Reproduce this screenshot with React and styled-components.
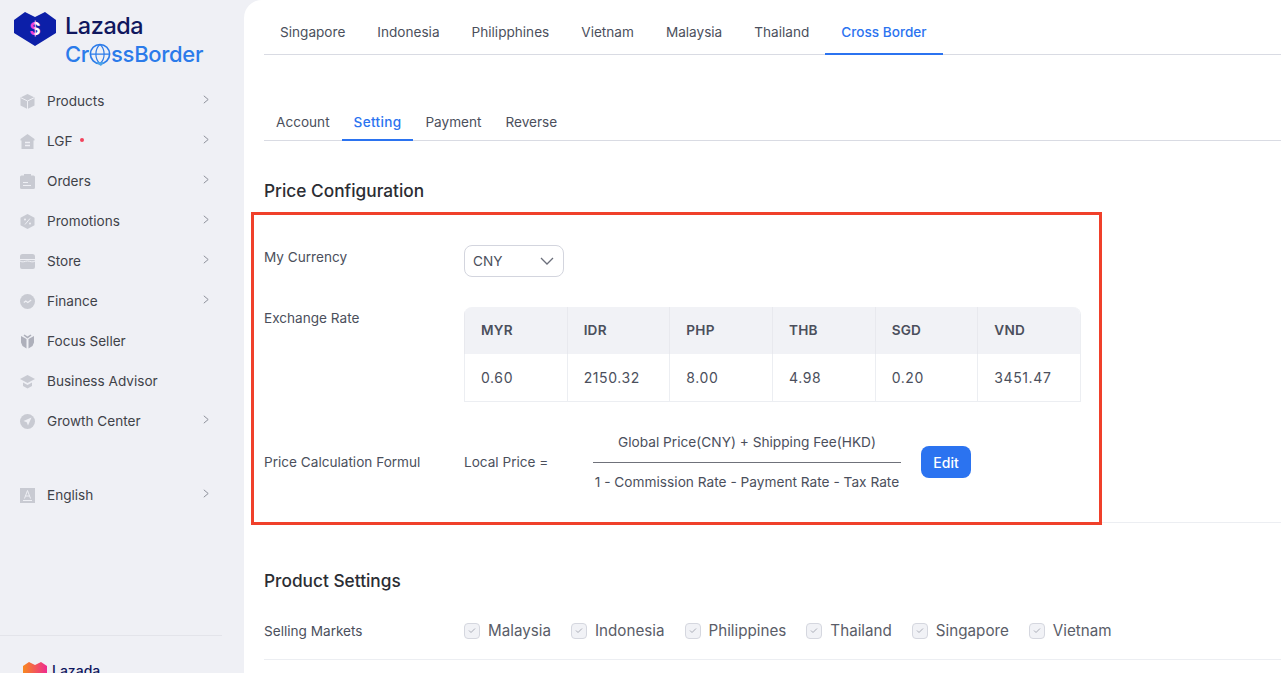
import React from 'react';
import styled, { createGlobalStyle } from 'styled-components';

const GlobalStyle = createGlobalStyle`
    html, body {
        margin: 0;
        padding: 0;
        height: 100%;
        overflow: hidden;
        background: #eff0f5;
    }
    * {
        box-sizing: border-box;
    }
    body {
        font-family: Inter, "Liberation Sans", sans-serif;
        color: #4b4f5c;
    }
`;

const Page = styled.div`
    display: flex;
    width: 1281px;
    height: 673px;
    overflow: hidden;
`;

const Sidebar = styled.aside`
    width: 244px;
    height: 673px;
    flex-shrink: 0;
    background: #eff0f5;
    display: flex;
    flex-direction: column;
`;

const Brand = styled.div`
    display: flex;
    height: 81px;
    padding: 12px 0 0 14px;
    gap: 9px;
`;

const BrandWords = styled.div`
    display: flex;
    flex-direction: column;
`;

const BrandName = styled.div`
    font-size: 23.4px;
    line-height: 28px;
    font-weight: 500;
    color: #10175e;
    letter-spacing: -0.4px;
`;

const BrandSub = styled.div`
    display: flex;
    align-items: center;
    height: 27px;
    margin-top: 1px;
    font-size: 22px;
    line-height: 27px;
    font-weight: 500;
    color: #2b7bea;
    letter-spacing: -0.3px;
`;

const Menu = styled.nav`
    display: flex;
    flex-direction: column;
`;

const MenuRow = styled.div`
    display: flex;
    align-items: center;
    height: 40px;
    padding-left: 20px;
    margin-top: ${props => (props.$gap ? '34px' : '0')};
`;

const MenuIcon = styled.svg`
    width: 15px;
    height: 15px;
    flex-shrink: 0;
    fill: ${props => (props.$dark ? '#aeb0bb' : '#c8cad2')};
    stroke: none;
`;

const MenuLabel = styled.span`
    margin-left: 12px;
    font-size: 13.6px;
    color: #3f4249;
    display: flex;
    align-items: center;
    gap: 8px;
`;

const RedDot = styled.span`
    width: 4px;
    height: 4px;
    border-radius: 50%;
    background: #f2435c;
    margin-top: -2px;
`;

const Arrow = styled.svg`
    position: absolute;
    left: 203px;
    width: 6px;
    height: 9px;
    margin-top: -3px;
    fill: none;
    stroke: #8d909a;
    stroke-width: 1;
`;

const SidebarFoot = styled.div`
    margin-top: auto;
    height: 38px;
    width: 222px;
    border-top: 1px solid #e3e4ea;
    display: flex;
    gap: 5px;
    padding: 26px 0 0 23px;
`;

const FootName = styled.span`
    font-size: 14px;
    line-height: 18px;
    font-weight: 500;
    color: #10175e;
`;

const Main = styled.main`
    flex: 1;
    height: 673px;
    background: #fff;
    border-top-left-radius: 18px;
    padding: 0 0 0 20px;
    position: relative;
`;

const TabBar = styled.div`
    display: flex;
    border-bottom: 1px solid #d9dbe3;
    height: ${props => (props.$sub ? '38px' : '55px')};
    margin-top: ${props => (props.$sub ? '48px' : '0')};
`;

const Tab = styled.div`
    display: flex;
    align-items: center;
    height: ${props => (props.$sub ? '38px' : '55px')};
    padding: ${props => (props.$sub ? '2px 12px 0' : '10px 16px 0')};
    font-size: 13.6px;
    font-weight: ${props => (props.$active ? 500 : 400)};
    letter-spacing: ${props => (props.$sub && props.$active ? '0.3px' : '0')};
    color: ${props => (props.$active ? '#2b73f0' : '#4b4f5c')};
    border-bottom: 2px solid ${props => (props.$active ? '#2b73f0' : 'transparent')};
`;

const SectionTitle = styled.h2`
    margin: 0;
    font-size: 17.3px;
    line-height: 24px;
    font-weight: 500;
    color: #2b2d33;
`;

const PriceSection = styled.section`
    padding-top: 38px;
    height: 382px;
    border-bottom: 1px solid #eceef2;
`;

const FormGrid = styled.div`
    display: grid;
    grid-template-columns: 200px 617px;
    align-items: start;
    margin-top: 42px;
`;

const RowLabel = styled.div`
    font-size: 13.6px;
    line-height: 20px;
    color: #4b4f5c;
    margin-top: ${props => props.$offset}px;
`;

const CurrencySelect = styled.div`
    display: flex;
    align-items: center;
    justify-content: space-between;
    width: 100px;
    height: 32px;
    padding: 0 9px 0 8px;
    border: 1px solid #d3d5de;
    border-radius: 8px;
    font-size: 13.6px;
    color: #4b4f5c;
`;

const ChevronDown = styled.svg`
    width: 14px;
    height: 8px;
    fill: none;
    stroke: #6a6e7a;
    stroke-width: 1.3;
`;

const RateTable = styled.div`
    display: grid;
    grid-template-columns: repeat(6, 1fr);
    margin-top: 30px;
    border-radius: 8px 8px 0 0;
    overflow: hidden;
    border-bottom: 1px solid #eceef2;
    border-right: 1px solid #eceef2;
`;

const HeadCell = styled.div`
    display: flex;
    align-items: center;
    height: 47px;
    padding: 0 0 2px 16px;
    background: #f1f2f6;
    border-left: 1px solid #e8e9ee;
    font-size: 13.6px;
    font-weight: 600;
    color: #4b4f5c;
    letter-spacing: 0.2px;
`;

const ValueCell = styled.div`
    display: flex;
    align-items: center;
    height: 47px;
    padding-left: 16px;
    border-left: 1px solid #eceef2;
    font-size: 14px;
    letter-spacing: 0.6px;
    color: #4b4f5c;
`;

const FormulaRow = styled.div`
    display: flex;
    align-items: center;
    margin-top: 30px;
    height: 60px;
`;

const LocalPrice = styled.div`
    width: 129px;
    font-size: 13.6px;
    color: #4b4f5c;
`;

const Fraction = styled.div`
    width: 308px;
    display: flex;
    flex-direction: column;
    align-items: center;
    font-size: 13.7px;
    line-height: 20px;
    color: #4b4f5c;
    white-space: nowrap;
`;

const FractionTop = styled.div`
    height: 30px;
`;

const FractionLine = styled.div`
    width: 100%;
    height: 1px;
    background: #6f717a;
`;

const FractionBottom = styled.div`
    margin-top: 9px;
`;

const EditButton = styled.button`
    margin-left: 20px;
    width: 50px;
    height: 32px;
    border: none;
    border-radius: 8px;
    background: #2b73f0;
    color: #fff;
    font-family: inherit;
    font-size: 14px;
    font-weight: 500;
`;

const ProductSection = styled.section`
    height: 137px;
    padding-top: 46px;
    border-bottom: 1px solid #eceef2;
`;

const MarketRow = styled.div`
    display: flex;
    align-items: center;
    margin-top: 28px;
`;

const MarketLabel = styled.div`
    width: 200px;
    font-size: 13.6px;
    color: #4b4f5c;
`;

const Markets = styled.div`
    display: flex;
    gap: 20px;
`;

const Market = styled.label`
    display: flex;
    align-items: center;
    gap: 8px;
    font-size: 15.2px;
    color: #5a5d68;
`;

const Check = styled.span`
    display: flex;
    align-items: center;
    justify-content: center;
    width: 16px;
    height: 16px;
    border: 1px solid #d5d7df;
    border-radius: 4px;
    background: #f1f2f6;
`;

const CheckMark = styled.svg`
    width: 8px;
    height: 7px;
    fill: none;
    stroke: #a9acb6;
    stroke-width: 1;
`;

// the red annotation box drawn over the screenshot
const Highlight = styled.div`
    position: absolute;
    left: 7px;
    top: 212px;
    width: 851px;
    height: 313px;
    border: 3px solid #f0402a;
    pointer-events: none;
`;

const cut = { stroke: '#eff0f5', strokeWidth: 1, fill: 'none' };

const menuIcons = {
    products: (
        <>
            <path d="M7.5 0 14.5 3.5v8L7.5 15 .5 11.5v-8z" />
            <path d="M1 3.8 7.5 7 14 3.8M7.5 7v8" {...cut} />
        </>
    ),
    lgf: (
        <>
            <path d="M7.5 0 14.5 5v1.5h-1V15h-12V6.5h-1V5z" />
            <path d="M5 8.5h5M5 11.5h5" {...cut} strokeWidth="1.3" />
        </>
    ),
    orders: (
        <>
            <path d="M4 0h7v1.5h2.5A1.5 1.5 0 0 1 15 3v10.500a1.500 1.500 0 0 1-1.500 1.500h-12A1.500 1.500 0 0 1 0 13.500V3a1.500 1.500 0 0 1 1.500-1.500H4z" />
            <path d="M3 8.5h5M3 11.5h8" {...cut} />
        </>
    ),
    promotions: (
        <>
            <path d="M7.5 0 14.5 3.7v7.6L7.5 15 .5 11.3V3.7z" />
            <path d="M5 10.5l5-6" {...cut} />
            <circle cx="5" cy="5.5" r="1" fill="#eff0f5" />
            <circle cx="10" cy="9.5" r="1" fill="#eff0f5" />
        </>
    ),
    store: (
        <>
            <path d="M2.5 0h10A2.5 2.5 0 0 1 15 2.5V13a2 2 0 0 1-2 2H2a2 2 0 0 1-2-2V2.5A2.5 2.5 0 0 1 2.5 0z" />
            <path d="M0 5.5h15M0 7c2.500 2 5 0 7.500 0s5 2 7.500 0" {...cut} />
        </>
    ),
    finance: (
        <>
            <circle cx="7.5" cy="7.5" r="7.5" />
            <path d="M3.8 8.5l2-1.500 2 1.500 3.400-2.500" {...cut} strokeWidth="1.2" />
        </>
    ),
    focus: (
        <path d="M1 2 6.5 5v9.500L2.500 12 1 8.500zM14 2 8.500 5v9.500l4-2.500L14 8.500zM4.500 .5l3 2 3-2 1 1-4 3-4-3z" />
    ),
    advisor: (
        <path d="M7.5 1 15 5 7.500 9 0 5zM3 8.500l4.500 2.400L12 8.500V12l-4.500 2.500L3 12z" />
    ),
    growth: (
        <>
            <circle cx="7.5" cy="7.5" r="7.5" />
            <path d="M11.5 3.5 3.500 7l3.200 1.200L8 11.500z" fill="#eff0f5" />
        </>
    ),
    english: (
        <>
            <path d="M0 0h15v15H0z" />
            <path d="M4.5 10.500 7.500 2.500l3 8M5.500 8h4M3 12.500h9" {...cut} />
        </>
    ),
};

const menuItems = [
    { label: 'Products', icon: 'products', more: true },
    { label: 'LGF', icon: 'lgf', more: true, dot: true },
    { label: 'Orders', icon: 'orders', more: true },
    { label: 'Promotions', icon: 'promotions', more: true },
    { label: 'Store', icon: 'store', more: true },
    { label: 'Finance', icon: 'finance', more: true },
    { label: 'Focus Seller', icon: 'focus' },
    { label: 'Business Advisor', icon: 'advisor' },
    { label: 'Growth Center', icon: 'growth', more: true },
    { label: 'English', icon: 'english', more: true, gap: true },
];

const countryTabs = ['Singapore', 'Indonesia', 'Philipphines', 'Vietnam', 'Malaysia', 'Thailand', 'Cross Border'];
const settingTabs = ['Account', 'Setting', 'Payment', 'Reverse'];
const rates = [
    ['MYR', '0.60'],
    ['IDR', '2150.32'],
    ['PHP', '8.00'],
    ['THB', '4.98'],
    ['SGD', '0.20'],
    ['VND', '3451.47'],
];
const markets = ['Malaysia', 'Indonesia', 'Philippines', 'Thailand', 'Singapore', 'Vietnam'];

const HeartLogo = () => (
    <svg width="42" height="34" viewBox="0 0 42 34">
        <defs>
            <linearGradient id="dollar" x1="0" y1="0" x2="1" y2="0">
                <stop offset="0.35" stopColor="#f03cd8" />
                <stop offset="0.6" stopColor="#fff" />
            </linearGradient>
        </defs>
        <path d="M0 8 11 0l10 5L31 0l11 8v13L21 34 0 21z" fill="#0c1fa8" />
        <text x="21" y="23" textAnchor="middle" fontFamily="Inter, sans-serif" fontSize="17" fontWeight="700" fill="url(#dollar)">$</text>
    </svg>
);

const GlobeO = () => (
    <svg width="22" height="24" viewBox="0 0 24 26" fill="none" stroke="#2b7bea" strokeWidth="1.8">
        <circle cx="12" cy="12" r="10.5" />
        <path d="M1.5 12h21M12 1.5c-6 5-6 16 0 21M12 1.5c6 5 6 16 0 21" strokeWidth="1.3" />
        <path d="M7 21h10l-4 4z" fill="#4aa3e8" stroke="none" />
    </svg>
);

const FootLogo = () => (
    <svg width="24" height="20" viewBox="0 0 24 20">
        <defs>
            <linearGradient id="foot" x1="0" y1="0" x2="1" y2="0">
                <stop offset="0" stopColor="#f7891f" />
                <stop offset="1" stopColor="#ee2a8f" />
            </linearGradient>
        </defs>
        <path d="M0 4 6 0l6 3 6-3 6 4v8l-12 8L0 12z" fill="url(#foot)" />
    </svg>
);

const App = () => (
    <Page>
        <GlobalStyle />
        <Sidebar>
            <Brand>
                <HeartLogo />
                <BrandWords>
                    <BrandName>Lazada</BrandName>
                    <BrandSub>Cr<GlobeO />ssBorder</BrandSub>
                </BrandWords>
            </Brand>
            <Menu>
                {menuItems.map(item => (
                    <MenuRow key={item.label} $gap={item.gap}>
                        <MenuIcon viewBox="0 0 15 15" $dark={item.icon === 'focus'}>{menuIcons[item.icon]}</MenuIcon>
                        <MenuLabel>
                            {item.label}
                            {item.dot && <RedDot />}
                        </MenuLabel>
                        {item.more && (
                            <Arrow viewBox="0 0 6 9"><path d="M.8 .8l4.4 3.700L.8 8.200" /></Arrow>
                        )}
                    </MenuRow>
                ))}
            </Menu>
            <SidebarFoot>
                <FootLogo />
                <FootName>Lazada</FootName>
            </SidebarFoot>
        </Sidebar>
        <Main>
            <TabBar>
                {countryTabs.map(tab => (
                    <Tab key={tab} $active={tab === 'Cross Border'}>{tab}</Tab>
                ))}
            </TabBar>
            <TabBar $sub>
                {settingTabs.map(tab => (
                    <Tab key={tab} $sub $active={tab === 'Setting'}>{tab}</Tab>
                ))}
            </TabBar>
            <PriceSection>
                <SectionTitle>Price Configuration</SectionTitle>
                <FormGrid>
                    <RowLabel $offset={2}>My Currency</RowLabel>
                    <CurrencySelect>
                        CNY
                        <ChevronDown viewBox="0 0 14 8"><path d="M1 1l6 6 6-6" /></ChevronDown>
                    </CurrencySelect>
                    <RowLabel $offset={31}>Exchange Rate</RowLabel>
                    <RateTable>
                        {rates.map(([code]) => <HeadCell key={code}>{code}</HeadCell>)}
                        {rates.map(([code, value]) => <ValueCell key={code}>{value}</ValueCell>)}
                    </RateTable>
                    <RowLabel $offset={50}>Price Calculation Formul</RowLabel>
                    <FormulaRow>
                        <LocalPrice>Local Price =</LocalPrice>
                        <Fraction>
                            <FractionTop>Global Price(CNY) + Shipping Fee(HKD)</FractionTop>
                            <FractionLine />
                            <FractionBottom>1 - Commission Rate - Payment Rate - Tax Rate</FractionBottom>
                        </Fraction>
                        <EditButton>Edit</EditButton>
                    </FormulaRow>
                </FormGrid>
            </PriceSection>
            <ProductSection>
                <SectionTitle>Product Settings</SectionTitle>
                <MarketRow>
                    <MarketLabel>Selling Markets</MarketLabel>
                    <Markets>
                        {markets.map(market => (
                            <Market key={market}>
                                <Check>
                                    <CheckMark viewBox="0 0 8 7"><path d="M1 3.5l2 2 4-4" /></CheckMark>
                                </Check>
                                {market}
                            </Market>
                        ))}
                    </Markets>
                </MarketRow>
            </ProductSection>
            <Highlight />
        </Main>
    </Page>
);

export default App;
